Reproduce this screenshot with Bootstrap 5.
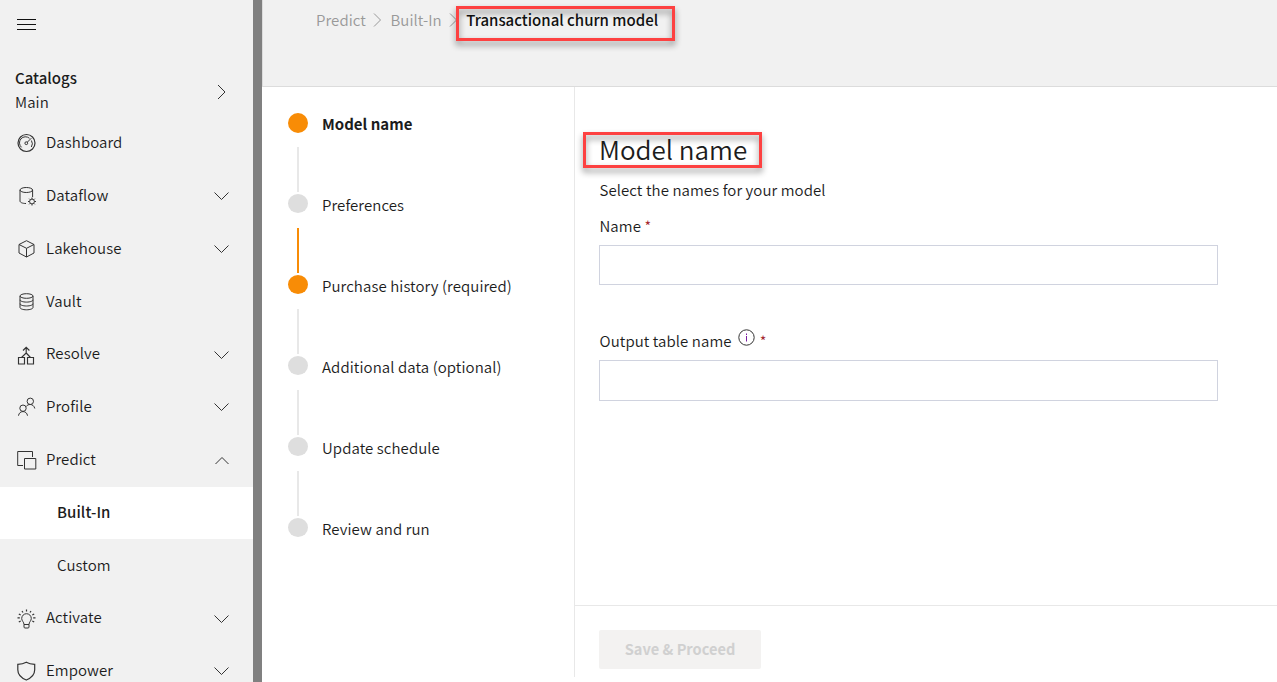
<!DOCTYPE html>
<html lang="en">
<head>
<meta charset="utf-8">
<meta name="viewport" content="width=device-width, initial-scale=1">
<title>Transactional churn model</title>
<link href="https://cdn.jsdelivr.net/npm/bootstrap@5.3.0/dist/css/bootstrap.min.css" rel="stylesheet">
<style>
  body { font-family: "Noto Sans CJK SC", "Noto Sans", sans-serif; font-size: 15px; letter-spacing: .08px; font-weight: 350; line-height: 24px; color: #1c1c1c; background: #fff; }
  .app-shell { height: 682px; }
  .side-panel { width: 253px; background: #f1f1f1; }
  .splitter { width: 9px; background: #808080; }
  .menu-head { height: 54px; padding: 18px 0 0 17px; flex: none; }
  .catalog { height: 63.1px; padding: 12px 26px 0 15px; flex: none; }
  .catalog svg { margin-top: 18px; }
  .side-item { height: 52.8px; padding: 0 24px 0 17px; color: #1c1c1c; text-decoration: none; flex: none; }
  .side-item .glyph { width: 20px; height: 20px; margin-right: 9px; }
  .side-item .txt { margin-top: -2.44px; }
  .side-item .sub-text { margin-left: 40px; margin-top: -1.4px; }
  .side-item.current { background: #fff; font-weight: 500; }
  svg { fill: none; stroke: #333; stroke-width: 1; flex: none; }
  .semi { font-weight: 500; letter-spacing: 0; }
  .top-strip { height: 87px; background: #f1f1f1; border-bottom: 1px solid #dcdcdc; border-left: 1px solid #dcdcdc; padding: 8px 0 0 53px; }
  .top-strip .crumb { color: #999; text-decoration: none; }
  .top-strip .sep { margin: 4px 8px 0 7.5px; }
  .top-strip .now { color: #111; }
  .marked { position: relative; }
  .marked::after { content: ""; position: absolute; border: 3px solid #fd4141; filter: drop-shadow(0 4px 3px rgba(0,0,0,.45)); }
  .now.marked::after { left: -10px; right: -17px; top: -2px; height: 35px; }
  h1.marked::after { left: -16px; right: -15px; top: 1px; height: 36px; }
  .main-split { padding-bottom: 5px; }
  .step-pane { width: 313px; border-right: 1px solid #e8e8e8; padding: 26px 0 0 26px; }
  .step { height: 81px; }
  .step b { letter-spacing: 0; }
  .step .track { width: 20px; margin-right: 14px; }
  .step-text { margin-top: -1px; }
  .dot { width: 20px; height: 20px; border-radius: 50%; background: #dedede; }
  .step + .step .dot { height: 19px; margin-bottom: 1px; }
  .stem { width: 2px; height: 45px; background: #e8e8e8; margin-top: 14px; }
  .dot.lit, .stem.lit { background: #f88c06; }
  .form-pane { padding: 44px 59px 0 24px; }
  .form-pane p, .form-pane label { padding-left: .5px; }
  h1 { font-size: 26px; letter-spacing: 0; line-height: 36px; font-weight: 350; margin: 0; }
  .req { color: #a4262c; font-size: 14.5px; }
  .form-control { height: 40px; border-radius: 0; border-color: #d0d3df; }
  .form-foot { height: 72px; border-top: 1px solid #e8e8e8; padding: 24px 24px 0; }
  .btn-save, .btn-save:disabled { width: 162px; height: 39px; padding: 0 0 2px; border: 0; border-radius: 2px; background: #f3f2f1; color: #d0d0d0; font-weight: 700; font-size: 14.6px; letter-spacing: 0; opacity: 1; }
</style>
</head>
<body>
<div class="app-shell d-flex overflow-hidden">
  <nav class="side-panel d-flex flex-column flex-shrink-0 overflow-hidden">
    <div class="menu-head"><svg class="d-block" width="19" height="12" viewBox="0 0 19 12"><path d="M0 1.500h19M0 6.500h19M0 11.500h19" stroke="#111"/></svg></div>
    <div class="catalog d-flex justify-content-between">
      <div><div class="semi">Catalogs</div><div>Main</div></div>
      <svg width="10" height="16" viewBox="0 0 10 16"><path d="M1 1 8 8l-7 7"/></svg>
    </div>
    <a class="side-item d-flex align-items-center" href="#">
      <svg class="glyph" viewBox="0 0 20 20"><circle cx="9.500" cy="10" r="8.500" stroke-width="1.200"/><path d="M4.500 14.300a6 6 0 0 1 8-9M14.400 7.500a6 6 0 0 1-.1 6.500M10.300 9.200 14.300 5.200"/><circle cx="9.300" cy="10.200" r="1.400"/></svg>
      <span class="txt">Dashboard</span></a>
    <a class="side-item d-flex align-items-center" href="#">
      <svg class="glyph" viewBox="0 0 20 20"><ellipse cx="9.300" cy="4" rx="6.300" ry="2.500"/><path d="M3 4v11c0 1.500 2.500 2.500 6 2.500M15.600 4v7"/><circle cx="15" cy="15.500" r="2.400"/><path d="M15 11.500v1.500M15 18v1.500M11 15.500h1.500M17.500 15.500H19M12.200 12.700l1 1M16.800 17.300l1 1M17.800 12.700l-1 1M13.200 17.300l-1 1"/></svg>
      <span class="txt">Dataflow</span><svg class="ms-auto" width="16" height="10" viewBox="0 0 16 10"><path d="m1.500 1.500 7 7 7-7"/></svg></a>
    <a class="side-item d-flex align-items-center" href="#">
      <svg class="glyph" viewBox="0 0 20 20"><path d="M9.500 1.700 17 5.500v8.500l-7.500 4-7.500-4V5.500zM2 5.500l7.500 3.800L17 5.500M9.500 9.300V18"/></svg>
      <span class="txt">Lakehouse</span><svg class="ms-auto" width="16" height="10" viewBox="0 0 16 10"><path d="m1.500 1.500 7 7 7-7"/></svg></a>
    <a class="side-item d-flex align-items-center" href="#">
      <svg class="glyph" viewBox="0 0 20 20"><ellipse cx="9.500" cy="4" rx="6.500" ry="2.300"/><path d="M3 4v11.500c0 1.200 2.700 2.300 6.500 2.300s6.500-1.100 6.500-2.300V4M3 7.800c0 1.200 2.700 2.300 6.500 2.300S16 9 16 7.800M3 11.700c0 1.200 2.700 2.300 6.500 2.300s6.500-1.100 6.500-2.300"/></svg>
      <span class="txt">Vault</span></a>
    <a class="side-item d-flex align-items-center" href="#">
      <svg class="glyph" viewBox="0 0 20 20"><path d="M1.500 12.500h6V19h-6zM10.500 12.500h6V19h-6zM9.200 2.500V8l-4.700 4.500M9.200 8l4.300 4.500M6 5.500l3.200-3.200 3.200 3.200" stroke-width="1.150"/></svg>
      <span class="txt">Resolve</span><svg class="ms-auto" width="16" height="10" viewBox="0 0 16 10"><path d="m1.500 1.500 7 7 7-7"/></svg></a>
    <a class="side-item d-flex align-items-center" href="#">
      <svg class="glyph" viewBox="0 0 20 20"><circle cx="13.300" cy="4.300" r="3.200"/><circle cx="6" cy="11.200" r="3.200"/><path d="M9.300 9.500c1-2.500 7.200-3.500 8.500 2M1.500 18.700c.7-5.500 8.300-5.500 9 0"/></svg>
      <span class="txt">Profile</span><svg class="ms-auto" width="16" height="10" viewBox="0 0 16 10"><path d="m1.500 1.500 7 7 7-7"/></svg></a>
    <a class="side-item d-flex align-items-center" href="#">
      <svg class="glyph" viewBox="0 0 20 20"><path d="M6 15.500H.7V1.500h14.800V7M7.500 8.500h11.300v10.500H7.500z"/></svg>
      <span class="txt">Predict</span><svg class="ms-auto" width="16" height="10" viewBox="0 0 16 10"><path d="m2.500 9 6.500-6.500L15.500 9"/></svg></a>
    <a class="side-item current d-flex align-items-center" href="#"><span class="sub-text">Built-In</span></a>
    <a class="side-item d-flex align-items-center" href="#"><span class="sub-text">Custom</span></a>
    <a class="side-item d-flex align-items-center" href="#">
      <svg class="glyph" viewBox="0 0 20 20"><path d="M7 15.500c0-2.500-2.300-3.500-2.300-6a4.800 4.800 0 0 1 9.600 0c0 2.500-2.300 3.500-2.300 6zM7 15.500V18q0 1 1 1h3q1 0 1-1v-2.500"/><path d="M9.500.500v2M5 2l1 1.500M14 2l-1 1.500M1.800 5l1.900 1M17.200 5l-1.900 1M.500 8.800h2.300M16.200 8.800h2.300M1.800 13l1.900-1M17.200 13l-1.900-1" stroke-width="1.200"/></svg>
      <span class="txt">Activate</span><svg class="ms-auto" width="16" height="10" viewBox="0 0 16 10"><path d="m1.500 1.500 7 7 7-7"/></svg></a>
    <a class="side-item d-flex align-items-center" href="#">
      <svg class="glyph" viewBox="0 0 20 20"><path d="M9.300 1.300c2.200 1.300 5.200 2 8.400 2v5.500c0 5-4.200 8.500-8.400 10.200C5 17.300.8 13.800.8 8.800V3.300c3.200 0 6.200-.7 8.500-2z" stroke-width="1.200"/></svg>
      <span class="txt">Empower</span><svg class="ms-auto" width="16" height="10" viewBox="0 0 16 10"><path d="m1.500 1.500 7 7 7-7"/></svg></a>
  </nav>
  <div class="splitter flex-shrink-0"></div>
  <main class="d-flex flex-column flex-grow-1">
    <header class="top-strip d-flex align-items-start flex-shrink-0">
      <a class="crumb" href="#">Predict</a>
      <svg class="sep" width="9" height="16" viewBox="0 0 9 16"><path d="M1 1.500 7.500 8 1 14.500" stroke="#999"/></svg>
      <a class="crumb" href="#">Built-In</a>
      <svg class="sep" width="9" height="16" viewBox="0 0 9 16"><path d="M1 1.500 7.500 8 1 14.500" stroke="#999"/></svg>
      <span class="now semi marked">Transactional churn model</span>
    </header>
    <div class="main-split d-flex flex-grow-1">
      <section class="step-pane flex-shrink-0">
        <div class="step d-flex"><div class="track d-flex flex-column align-items-center"><i class="dot lit"></i><i class="stem"></i></div><b class="step-text">Model name</b></div>
        <div class="step d-flex"><div class="track d-flex flex-column align-items-center"><i class="dot"></i><i class="stem lit"></i></div><span class="step-text">Preferences</span></div>
        <div class="step d-flex"><div class="track d-flex flex-column align-items-center"><i class="dot lit"></i><i class="stem"></i></div><span class="step-text">Purchase history (required)</span></div>
        <div class="step d-flex"><div class="track d-flex flex-column align-items-center"><i class="dot"></i><i class="stem"></i></div><span class="step-text">Additional data (optional)</span></div>
        <div class="step d-flex"><div class="track d-flex flex-column align-items-center"><i class="dot"></i><i class="stem"></i></div><span class="step-text">Update schedule</span></div>
        <div class="step d-flex"><div class="track d-flex flex-column align-items-center"><i class="dot"></i></div><span class="step-text">Review and run</span></div>
      </section>
      <section class="d-flex flex-column flex-grow-1">
        <div class="form-pane flex-grow-1">
          <div class="d-flex"><h1 class="marked">Model name</h1></div>
          <p class="mb-0" style="margin-top:11px">Select the names for your model</p>
          <label class="d-block" style="margin:12px 0 7px" for="n1">Name <span class="req">*</span></label>
          <input id="n1" class="form-control" type="text">
          <label class="d-flex" style="margin:44px 0 7px" for="n2">Output table name
            <svg style="margin:0 5px 0 6px" width="17" height="17" viewBox="0 0 17 17"><circle cx="8.500" cy="8.500" r="7.700"/><path d="M8.500 7v5.500M8.500 4.500V6" stroke="#7b1fa2"/></svg><span class="req">*</span></label>
          <input id="n2" class="form-control" type="text" style="height:41px">
        </div>
        <div class="form-foot"><button class="btn btn-save" disabled>Save &amp; Proceed</button></div>
      </section>
    </div>
  </main>
</div>
<script src="https://cdn.jsdelivr.net/npm/bootstrap@5.3.0/dist/js/bootstrap.bundle.min.js"></script>
</body>
</html>
